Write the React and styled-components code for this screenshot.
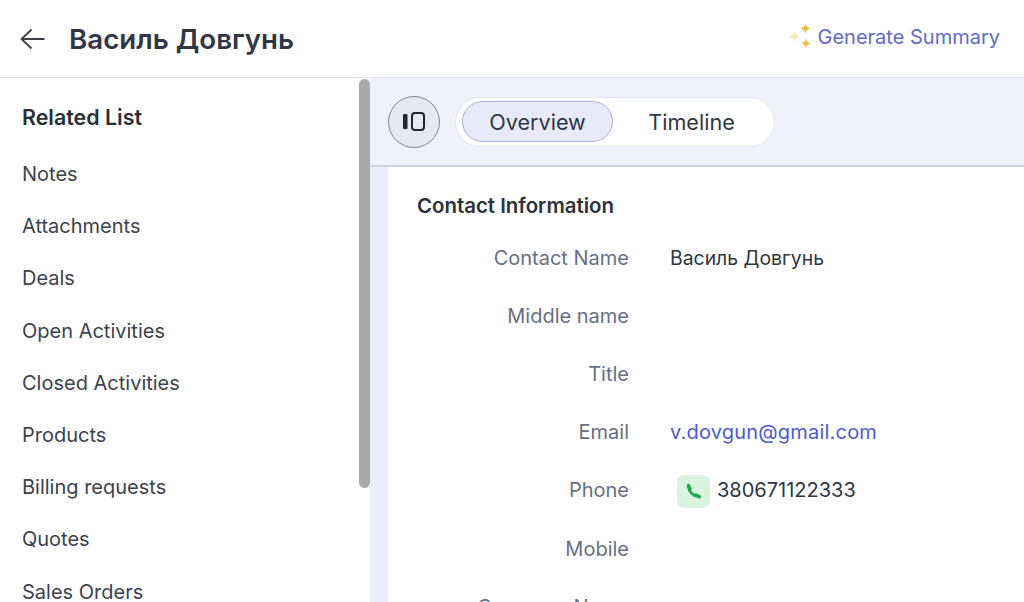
import styled, { createGlobalStyle } from 'styled-components'

const GlobalStyle = createGlobalStyle`
  html, body {
    margin: 0;
    padding: 0;
    background: #fff;
  }
  body {
    font-family: Inter, "Noto Sans", sans-serif;
    color: #2f3644;
  }
`

const Page = styled.div`
  width: 1024px;
  height: 602px;
  overflow: hidden;
  display: flex;
  flex-direction: column;
`

const Header = styled.header`
  height: 78px;
  flex: none;
  box-sizing: border-box;
  border-bottom: 1.5px solid #dfe1ea;
  display: flex;
  align-items: center;
  padding: 0 24px 0 20px;
`

const BackButton = styled.div`
  width: 25px;
  height: 24px;
  margin-right: 24px;
  color: #3a3f49;
  display: flex;
`

const Name = styled.h1`
  margin: 0;
  font-size: 27.7px;
  font-weight: 600;
  color: #2f3747;
  flex: 1;
`

const Summary = styled.div`
  display: flex;
  align-items: center;
  gap: 6px;
  font-size: 20px;
  color: #5f6bd3;
  margin-top: -4px;
`

const Body = styled.div`
  flex: 1;
  min-height: 0;
  display: flex;
`

const Sidebar = styled.aside`
  width: 359px;
  flex: none;
  box-sizing: border-box;
  padding: 26px 0 0 22px;
`

const SideTitle = styled.div`
  font-size: 21.4px;
  font-weight: 600;
  line-height: 26px;
  color: #2b2f38;
  margin-bottom: 18px;
`

const SideItem = styled.div`
  font-size: 20px;
  line-height: 52.2px;
  color: #3b4250;
`

const ScrollTrack = styled.div`
  width: 11px;
  flex: none;
  padding-top: 1px;
`

const ScrollThumb = styled.div`
  height: 409px;
  border-radius: 6px;
  background: #a9a9ab;
`

const Main = styled.main`
  flex: 1;
  min-width: 0;
  display: flex;
  flex-direction: column;
  background: #ebeef9;
`

const Toolbar = styled.div`
  height: 89px;
  flex: none;
  box-sizing: border-box;
  background: #eff1fb;
  border-bottom: 2px solid #cfd3e0;
  display: flex;
  align-items: center;
  gap: 15px;
  padding: 0 0 0 18px;
`

const RoundButton = styled.div`
  width: 52px;
  height: 52px;
  box-sizing: border-box;
  border-radius: 50%;
  border: 1.5px solid #85878f;
  background: #e6e8f3;
  display: flex;
  align-items: center;
  justify-content: center;
`

const Tabs = styled.div`
  width: 320px;
  height: 50px;
  box-sizing: border-box;
  border-radius: 25px;
  border: 1.5px solid #e1e4f0;
  background: #fff;
  display: flex;
  align-items: center;
  padding-left: 6px;
`

const Tab = styled.div`
  width: ${p => (p.$active ? '151px' : '157px')};
  height: 41px;
  box-sizing: border-box;
  border-radius: 21px;
  border: ${p => (p.$active ? '1.5px solid #a7aee3' : 'none')};
  background: ${p => (p.$active ? '#e8eafa' : 'transparent')};
  display: flex;
  align-items: center;
  justify-content: center;
  font-size: 21.6px;
  color: #2f3644;
`

const Content = styled.section`
  flex: 1;
  min-height: 0;
  margin-left: 18px;
  background: #fff;
  padding: 26px 0 0 29px;
  overflow: hidden;
`

const SectionTitle = styled.h2`
  margin: 0 0 9.5px;
  font-size: 20.4px;
  line-height: 26px;
  font-weight: 600;
  color: #2d313b;
`

const Row = styled.div`
  height: 58.2px;
  display: grid;
  grid-template-columns: 212px 1fr;
  column-gap: 41px;
  align-items: center;
  font-size: 20px;
`

const Label = styled.div`
  text-align: right;
  color: #667085;
`

const Value = styled.div`
  color: ${p => (p.$link ? '#4a5bd0' : '#2f3644')};
  font-size: ${p => (p.$cyrillic ? '19.4px' : '20px')};
  letter-spacing: ${p => (p.$link ? '0.2px' : '0')};
  display: flex;
  align-items: center;
`

const PhoneBadge = styled.span`
  width: 33px;
  height: 33px;
  margin: 3px 7px 0;
  border-radius: 7px;
  background: #d9f3de;
  display: flex;
  align-items: center;
  justify-content: center;
`

const Sparkles = () => (
  <svg width="23" height="27" viewBox="0 0 23 27">
    <path d="M16.500 0c.7 3.500 1.800 4.700 5.500 5.500-3.700.8-4.800 2-5.500 5.500-.7-3.500-1.800-4.700-5.500-5.500C14.700 4.700 15.800 3.500 16.500 0z" fill="#ecc23c" />
    <path d="M17 15.500c.7 3 1.700 4.100 5 5-3.300.8-4.300 1.900-5 5-.7-3.100-1.700-4.200-5-5 3.300-.9 4.300-2 5-5z" fill="#ecc23c" />
    <path d="M5.500 8c.7 3.300 1.700 4.400 5.500 5.500-3.800 1-4.800 2.200-5.500 5.500-.7-3.300-1.700-4.500-5.500-5.500C3.800 12.400 4.800 11.300 5.500 8z" fill="#f6e6b4" />
  </svg>
)

const PanelIcon = () => (
  <svg width="22" height="19" viewBox="0 0 22 19">
    <rect x="0" y="2" width="4.500" height="15" rx="1" fill="#23262d" />
    <rect x="9" y="1" width="12" height="17" rx="3" fill="none" stroke="#23262d" strokeWidth="2" />
  </svg>
)

const PhoneIcon = () => (
  <svg width="17" height="17" viewBox="0 0 17 17" fill="none" stroke="#1fa84a" strokeLinecap="round">
    <path d="M3.500 3.500C3.800 8.500 8 13 13.500 13.500" strokeWidth="2.800" />
    <path d="M3.300 2.500 5 6" strokeWidth="3.400" />
    <path d="M11 12 14.500 13.700" strokeWidth="3.400" />
  </svg>
)

const sideItems = ['Notes', 'Attachments', 'Deals', 'Open Activities', 'Closed Activities', 'Products', 'Billing requests', 'Quotes', 'Sales Orders']

export default function App() {
  return (
    <Page>
      <GlobalStyle />
      <Header>
        <BackButton>
          <svg width="25" height="24" viewBox="0 0 25 24" fill="none" stroke="currentColor" strokeWidth="1.800">
            <path d="M24.500 12H1.500M11.500 2.500 1.500 12l10 9.500" />
          </svg>
        </BackButton>
        <Name>Василь Довгунь</Name>
        <Summary>
          <Sparkles />
          Generate Summary
        </Summary>
      </Header>
      <Body>
        <Sidebar>
          <SideTitle>Related List</SideTitle>
          {sideItems.map(item => <SideItem key={item}>{item}</SideItem>)}
        </Sidebar>
        <ScrollTrack>
          <ScrollThumb />
        </ScrollTrack>
        <Main>
          <Toolbar>
            <RoundButton><PanelIcon /></RoundButton>
            <Tabs>
              <Tab $active>Overview</Tab>
              <Tab>Timeline</Tab>
            </Tabs>
          </Toolbar>
          <Content>
            <SectionTitle>Contact Information</SectionTitle>
            <Row><Label>Contact Name</Label><Value $cyrillic>Василь Довгунь</Value></Row>
            <Row><Label>Middle name</Label><Value /></Row>
            <Row><Label>Title</Label><Value /></Row>
            <Row><Label>Email</Label><Value $link>v.dovgun@gmail.com</Value></Row>
            <Row>
              <Label>Phone</Label>
              <Value><PhoneBadge><PhoneIcon /></PhoneBadge>380671122333</Value>
            </Row>
            <Row><Label>Mobile</Label><Value /></Row>
            <Row><Label>Company Name</Label><Value /></Row>
          </Content>
        </Main>
      </Body>
    </Page>
  )
}
